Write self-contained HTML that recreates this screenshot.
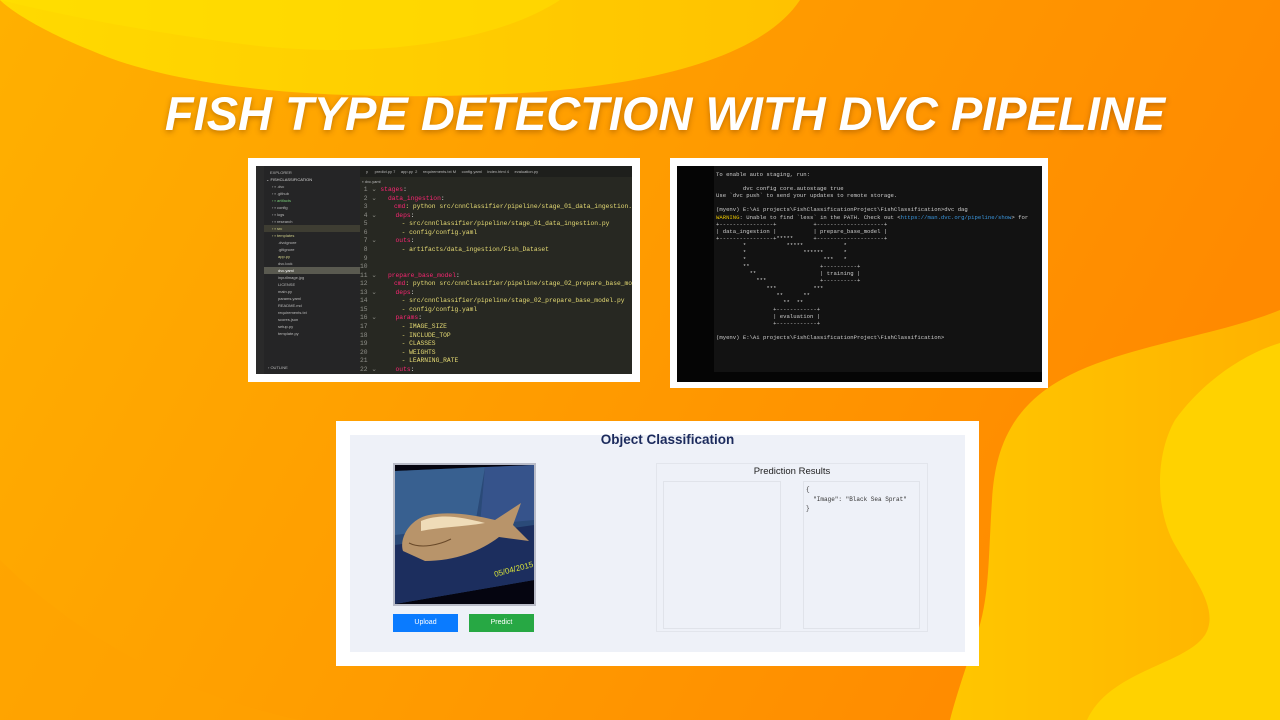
<!DOCTYPE html>
<html><head><meta charset="utf-8"><style>
*{margin:0;padding:0;box-sizing:border-box}
body{width:1280px;height:720px;overflow:hidden;position:relative;font-family:"Liberation Sans",sans-serif;background:#ff9f00}
.abs{position:absolute}
.title{left:0;width:1330px;top:86px;text-align:center;color:#fff;font-weight:bold;font-style:italic;font-size:47px;letter-spacing:0px;text-shadow:0 2px 6px rgba(120,60,0,.45);white-space:nowrap}
.mono{font-family:"Liberation Mono",monospace}
.code div{height:8.57px;line-height:8.57px;white-space:pre}
.k{color:#f92672}.s{color:#e6db74}.w{color:#ddd}
.term div{height:7.1px;line-height:7.1px;white-space:pre;color:#ccc;font-size:5.6px}
.side div{height:7px;line-height:7px;font-size:4px;color:#bbb;white-space:pre}
</style></head><body>
<svg class="abs" style="left:0;top:0" width="1280" height="720">
<defs>
<linearGradient id="bg" x1="0" y1="0" x2="1" y2="0.3"><stop offset="0" stop-color="#ffb000"/><stop offset="1" stop-color="#ff8a00"/></linearGradient>
<linearGradient id="y1" x1="0" y1="0" x2="1" y2="0"><stop offset="0" stop-color="#ffdc00"/><stop offset="1" stop-color="#ffc400"/></linearGradient>
<linearGradient id="y2" x1="0" y1="0" x2="1" y2="0"><stop offset="0" stop-color="#ffc600"/><stop offset="1" stop-color="#ffb200"/></linearGradient>
</defs>
<rect width="1280" height="720" fill="url(#bg)"/>
<path d="M0 0 H800 C760 60 640 90 480 95 C330 100 180 90 90 50 C40 30 10 10 0 0Z" fill="url(#y1)" opacity=".95"/>
<path d="M0 0 H560 C500 40 380 60 250 45 C130 30 40 10 0 0Z" fill="#ffe200" opacity=".5"/>
<path d="M1280 310 C1220 335 1130 345 1070 375 C1010 405 995 450 992 500 C988 560 990 600 975 640 C965 670 955 700 950 720 H1280Z" fill="url(#y2)"/>
<path d="M1280 343 C1240 355 1200 385 1175 420 C1155 455 1155 510 1175 545 C1195 580 1220 610 1205 635 C1185 665 1110 670 1087 720 H1280Z" fill="#ffd200"/>
<path d="M0 560 C60 620 160 690 300 720 H0Z" fill="#ffa200" opacity=".5"/>
</svg>
<div class="abs title">FISH TYPE DETECTION WITH DVC PIPELINE</div>

<!-- screenshot 1 -->
<div class="abs" style="left:248px;top:158px;width:392px;height:224px;background:#fff"></div>
<div class="abs" style="left:256px;top:166px;width:376px;height:208px;background:#272822;overflow:hidden">
 <div class="abs" style="left:0;top:0;width:8px;height:208px;background:#2a2a2a"></div>
 <div class="abs side" style="left:8px;top:0;width:96px;height:208px;background:#252526">
  <div style="padding-left:6px;margin-top:3px">EXPLORER</div>
  <div style="padding-left:2px;color:#ddd">⌄ FISHCLASSIFICATION</div>
  <div style="padding-left:8px">› ▪ .dvc</div><div style="padding-left:8px">› ▪ .github</div><div style="padding-left:8px;color:#7c7">› ▪ artifacts</div><div style="padding-left:8px">› ▪ config</div><div style="padding-left:8px">› ▪ logs</div><div style="padding-left:8px">› ▪ research</div><div style="padding-left:8px;background:#3e3d32;color:#cc8">› ▪ src</div><div style="padding-left:8px;color:#cc8">› ▪ templates</div><div style="padding-left:14px">.dvcignore</div><div style="padding-left:14px">.gitignore</div><div style="padding-left:14px;color:#cc8">app.py</div><div style="padding-left:14px">dvc.lock</div><div style="padding-left:14px;background:#5a5a50;color:#fff">dvc.yaml</div><div style="padding-left:14px">inputImage.jpg</div><div style="padding-left:14px">LICENSE</div><div style="padding-left:14px">main.py</div><div style="padding-left:14px">params.yaml</div><div style="padding-left:14px">README.md</div><div style="padding-left:14px">requirements.txt</div><div style="padding-left:14px">scores.json</div><div style="padding-left:14px">setup.py</div><div style="padding-left:14px">template.py</div>
  <div class="abs" style="left:4px;top:198px">› OUTLINE</div>
 </div>
 <div class="abs" style="left:104px;top:0;width:272px;height:11px;background:#1e1f1c"></div>
 <div class="abs side" style="left:110px;top:2px;white-space:nowrap"><div>y      predict.py 7     app.py  2     requirements.txt M     config.yaml     index.html 4     evaluation.py</div></div>
 <div class="abs side" style="left:104px;top:12px"><div>  ▪ dvc.yaml</div></div>
 <div class="abs code mono" style="left:104px;top:20px;font-size:6.3px;color:#90908a">
  <div> 1 ⌄ <span class="k">stages</span><span class="w">:</span></div>
  <div> 2 ⌄   <span class="k">data_ingestion</span><span class="w">:</span></div>
  <div> 3       <span class="k">cmd</span><span class="s">: python src/cnnClassifier/pipeline/stage_01_data_ingestion.py</span></div>
  <div> 4 ⌄     <span class="k">deps</span><span class="w">:</span></div>
  <div> 5         <span class="s">- src/cnnClassifier/pipeline/stage_01_data_ingestion.py</span></div>
  <div> 6         <span class="s">- config/config.yaml</span></div>
  <div> 7 ⌄     <span class="k">outs</span><span class="w">:</span></div>
  <div> 8         <span class="s">- artifacts/data_ingestion/Fish_Dataset</span></div>
  <div> 9</div><div>10</div>
  <div>11 ⌄   <span class="k">prepare_base_model</span><span class="w">:</span></div>
  <div>12       <span class="k">cmd</span><span class="s">: python src/cnnClassifier/pipeline/stage_02_prepare_base_model.py</span></div>
  <div>13 ⌄     <span class="k">deps</span><span class="w">:</span></div>
  <div>14         <span class="s">- src/cnnClassifier/pipeline/stage_02_prepare_base_model.py</span></div>
  <div>15         <span class="s">- config/config.yaml</span></div>
  <div>16 ⌄     <span class="k">params</span><span class="w">:</span></div>
  <div>17         <span class="s">- IMAGE_SIZE</span></div>
  <div>18         <span class="s">- INCLUDE_TOP</span></div>
  <div>19         <span class="s">- CLASSES</span></div>
  <div>20         <span class="s">- WEIGHTS</span></div>
  <div>21         <span class="s">- LEARNING_RATE</span></div>
  <div>22 ⌄     <span class="k">outs</span><span class="w">:</span></div>
 </div>
</div>

<!-- screenshot 2 -->
<div class="abs" style="left:670px;top:158px;width:378px;height:230px;background:#fff"></div>
<div class="abs" style="left:677px;top:166px;width:365px;height:216px;background:#050505;overflow:hidden">
 <div class="abs" style="left:37px;top:0;width:328px;height:206px;background:#121212"></div>
 <div class="abs term mono" style="left:39px;top:5px">
  <div>To enable auto staging, run:</div><div> </div>
  <div>        dvc config core.autostage true</div>
  <div>Use `dvc push` to send your updates to remote storage.</div><div> </div>
  <div>(myenv) E:\Ai projects\FishClassificationProject\FishClassification&gt;dvc dag</div>
  <div><span style="color:#e5c100">WARNING</span>: Unable to find `less` in the PATH. Check out &lt;<span style="color:#3a96dd">https://man.dvc.org/pipeline/show</span>&gt; for</div>
  <div>+----------------+           +--------------------+</div>
  <div>| data_ingestion |           | prepare_base_model |</div>
  <div>+----------------+*****      +--------------------+</div>
  <div>        *            *****            *</div>
  <div>        *                 ******      *</div>
  <div>        *                       ***   *</div>
  <div>        **                     +----------+</div>
  <div>          **                   | training |</div>
  <div>            ***                +----------+</div>
  <div>               ***           ***</div>
  <div>                  **      **</div>
  <div>                    **  **</div>
  <div>                 +------------+</div>
  <div>                 | evaluation |</div>
  <div>                 +------------+</div><div> </div>
  <div>(myenv) E:\Ai projects\FishClassificationProject\FishClassification&gt;</div>
 </div>
</div>

<!-- screenshot 3 -->
<div class="abs" style="left:336px;top:421px;width:643px;height:245px;background:#fff"></div>
<div class="abs" style="left:350px;top:435px;width:615px;height:217px;background:#eef1f8"></div>
<div class="abs" style="left:336px;top:432px;width:663px;text-align:center;font-size:13.5px;font-weight:bold;color:#1b2a5c">Object Classification</div>
<div class="abs" style="left:393px;top:463px;width:143px;height:143px;background:#b9bcc8;padding:2px">
 <svg width="139" height="139" viewBox="0 0 139 139">
  <rect width="139" height="139" fill="#050510"/>
  <polygon points="0,6 139,0 139,115 0,139" fill="#2a4a78"/>
  <polygon points="0,6 90,2 80,60 0,70" fill="#3f6a9a" opacity=".7"/>
  <polygon points="90,2 139,0 139,55 85,60" fill="#3a5590" opacity=".8"/>
  <polygon points="0,80 139,60 139,115 0,139" fill="#1c2e5e"/>
  <path d="M8 86 C4 74 14 54 34 50 C55 46 80 50 100 55 L126 38 L118 60 L134 76 L104 72 C86 86 60 96 30 96 Z" fill="#b8946a"/>
  <path d="M26 56 C46 48 66 52 90 58 C66 62 46 62 26 66Z" fill="#efdcb8"/>
  <path d="M14 78 C26 84 44 80 56 74" stroke="#6a4a2a" fill="none"/>
  <text x="100" y="112" fill="#d7e23a" font-size="8" transform="rotate(-15 100 112)" font-family="Liberation Sans">05/04/2015</text>
 </svg>
</div>
<div class="abs" style="left:393px;top:614px;width:65px;height:18px;background:#0a7bff;color:#fff;font-size:7px;text-align:center;line-height:18px">Upload</div>
<div class="abs" style="left:469px;top:614px;width:65px;height:18px;background:#27a844;color:#fff;font-size:7px;text-align:center;line-height:18px">Predict</div>
<div class="abs" style="left:656px;top:463px;width:272px;height:169px;border:1px solid #e2e5ec"></div>
<div class="abs" style="left:656px;top:466px;width:272px;text-align:center;font-size:9.5px;color:#222">Prediction Results</div>
<div class="abs" style="left:663px;top:481px;width:118px;height:148px;border:1px solid #e0e3ea"></div>
<div class="abs" style="left:803px;top:481px;width:117px;height:148px;border:1px solid #e0e3ea"></div>
<div class="abs mono" style="left:806px;top:485px;font-size:6px;line-height:9.5px;color:#333;white-space:pre">{
  "Image": "Black Sea Sprat"
}</div>
</body></html>
